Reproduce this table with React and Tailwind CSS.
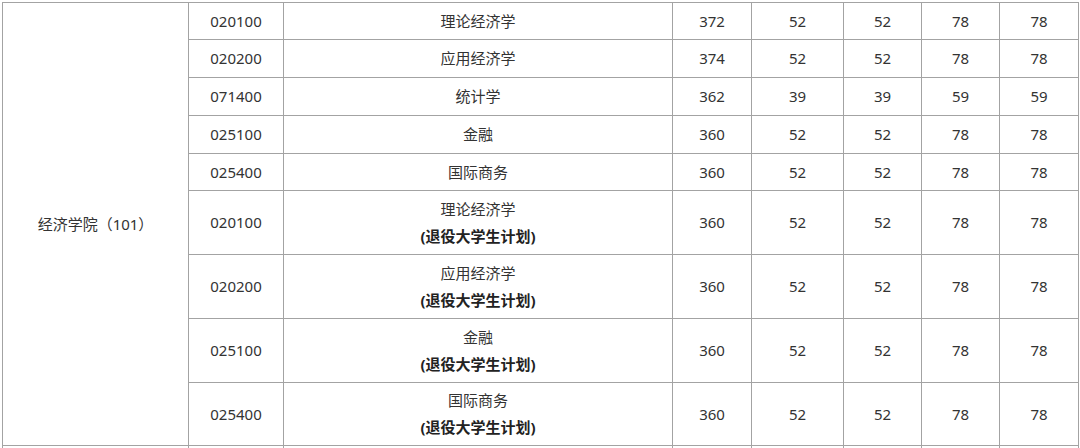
import React from 'react';

const rows = [
  { code: '020100', name: '理论经济学', total: 372, a: 52, b: 52, c: 78, d: 78 },
  { code: '020200', name: '应用经济学', total: 374, a: 52, b: 52, c: 78, d: 78 },
  { code: '071400', name: '统计学', total: 362, a: 39, b: 39, c: 59, d: 59 },
  { code: '025100', name: '金融', total: 360, a: 52, b: 52, c: 78, d: 78 },
  { code: '025400', name: '国际商务', total: 360, a: 52, b: 52, c: 78, d: 78 },
  { code: '020100', name: '理论经济学', plan: true, total: 360, a: 52, b: 52, c: 78, d: 78 },
  { code: '020200', name: '应用经济学', plan: true, total: 360, a: 52, b: 52, c: 78, d: 78 },
  { code: '025100', name: '金融', plan: true, total: 360, a: 52, b: 52, c: 78, d: 78 },
  { code: '025400', name: '国际商务', plan: true, total: 360, a: 52, b: 52, c: 78, d: 78 },
];

const cell = 'border border-[#a3a3a3] text-center align-middle p-0';

export default function App() {
  return (
    <div
      className="w-[1080px] h-[448px] overflow-hidden bg-white text-[#333] text-[15px] pt-[2px] pl-[2px]"
      style={{ fontFamily: '"Noto Sans", "Noto Sans CJK SC", sans-serif' }}
    >
      <table className="table-fixed border-collapse w-[1076px]">
        <colgroup>
          <col className="w-[186px]" />
          <col className="w-[95px]" />
          <col className="w-[389px]" />
          <col className="w-[79px]" />
          <col className="w-[92px]" />
          <col className="w-[78px]" />
          <col className="w-[78px]" />
          <col className="w-[79px]" />
        </colgroup>
        <tbody>
          {rows.map((r, i) => (
            <tr key={i} className={r.plan ? (i === 8 ? 'h-[63px]' : 'h-[64px]') : (i === 0 || i === 4 ? 'h-[37px]' : 'h-[38px]')}>
              {i === 0 && (
                <td rowSpan={rows.length} className={cell}>经济学院（101）</td>
              )}
              <td className={cell}>{r.code}</td>
              <td className={cell}>
                {r.plan ? (
                  <div className="leading-[27px]">
                    <p>{r.name}</p>
                    <p className="font-bold text-[#222]">(退役大学生计划)</p>
                  </div>
                ) : (
                  r.name
                )}
              </td>
              <td className={cell}>{r.total}</td>
              <td className={cell}>{r.a}</td>
              <td className={cell}>{r.b}</td>
              <td className={cell}>{r.c}</td>
              <td className={cell}>{r.d}</td>
            </tr>
          ))}
          <tr className="h-[20px]">
            {Array.from({ length: 8 }).map((_, k) => (
              <td key={k} className={cell}></td>
            ))}
          </tr>
        </tbody>
      </table>
    </div>
  );
}
